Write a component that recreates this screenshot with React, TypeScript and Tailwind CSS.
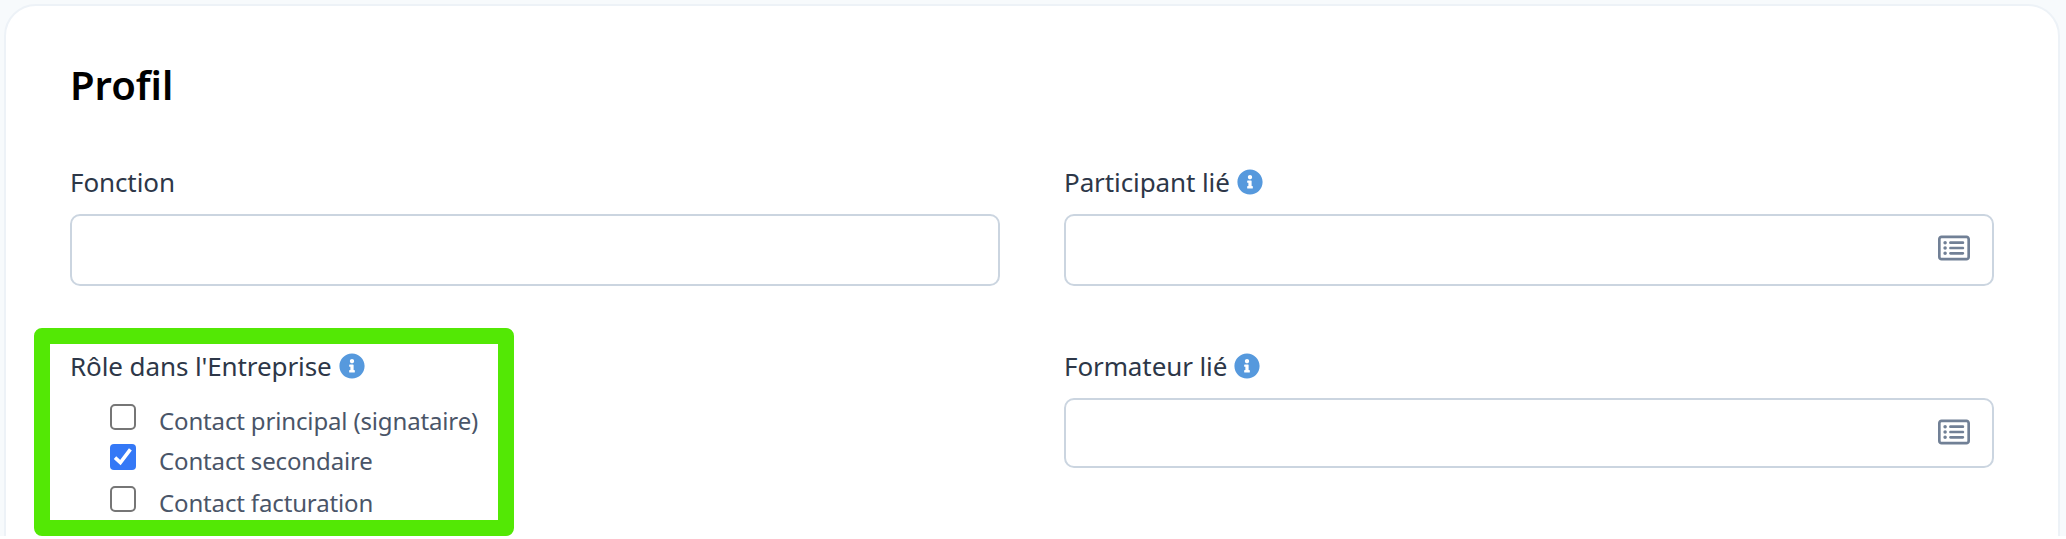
import { FaInfoCircle } from "react-icons/fa"
import { FaRegRectangleList } from "react-icons/fa6"

const roles = [
    { label: "Contact principal (signataire)", checked: false, row: "h-10" },
    { label: "Contact secondaire", checked: true, row: "h-[42px]" },
    { label: "Contact facturation", checked: false, row: "h-10" },
]

function Label({ text, info }: { text: string; info?: boolean }) {
    return (
        <div className="flex h-9 items-center text-[26px] leading-9 tracking-[-0.1px] whitespace-nowrap text-[#2d3748]">
            <span>{text}</span>
            {info && <FaInfoCircle className="ml-[7px] size-[26px] text-[#5699dd]" />}
        </div>
    )
}

function Checkbox({ checked }: { checked: boolean }) {
    if (checked) {
        return (
            <span className="size-[26px] rounded-[4px] bg-[#3478f6]">
                <svg viewBox="0 0 26 26" className="size-[26px]" fill="none" stroke="white" strokeWidth="3.6">
                    <path d="M5 13.6l5.4 5L20.4 5.4" />
                </svg>
            </span>
        )
    }
    return <span className="size-[26px] rounded-[5px] border-2 border-[#767676] bg-white" />
}

export default function App() {
    return (
        <div className="h-[539px] w-[2066px] overflow-hidden bg-white font-['Noto_Sans',sans-serif]">
            <div className="h-[536px] overflow-hidden bg-[#f7fafc] pt-1 pr-1.5 pl-1">
                <div className="h-[600px] rounded-[32px] border-2 border-[#edf2f7] bg-white px-16 pt-[49px]">
                    <h2 className="h-[60px] text-[40px] leading-[60px] font-semibold text-black">Profil</h2>
                    <div className="mt-[49px] grid grid-cols-2 gap-x-16">
                        <div>
                            <Label text="Fonction" />
                            <div className="mt-[14px] h-[72px] rounded-[10px] border-2 border-[#cbd5e0]" />
                        </div>
                        <div>
                            <Label text="Participant lié" info />
                            <div className="mt-[14px] flex h-[72px] items-center justify-end rounded-[10px] border-2 border-[#cbd5e0] pr-[22px] pb-1">
                                <FaRegRectangleList className="size-8 text-[#718096]" />
                            </div>
                        </div>
                        <div className="relative mt-[62px]">
                            <Label text="Rôle dans l'Entreprise" info />
                            <div className="mt-5 pl-10">
                                {roles.map((role) => (
                                    <div key={role.label} className={`flex items-start ${role.row}`}>
                                        <Checkbox checked={role.checked} />
                                        <span className="mt-px ml-[23px] text-[24px] leading-8 tracking-[-0.15px] whitespace-nowrap text-[#4a5568]">
                                            {role.label}
                                        </span>
                                    </div>
                                ))}
                            </div>
                            {/* highlight frame around the roles */}
                            <div className="absolute -top-5 -left-9 h-[208px] w-[480px] rounded-lg border-16 border-[#53e805]" />
                        </div>
                        <div className="mt-[62px]">
                            <Label text="Formateur lié" info />
                            <div className="mt-[14px] flex h-[70px] items-center justify-end rounded-[10px] border-2 border-[#cbd5e0] pr-[22px] pb-0.5">
                                <FaRegRectangleList className="size-8 text-[#718096]" />
                            </div>
                        </div>
                    </div>
                </div>
            </div>
        </div>
    )
}
